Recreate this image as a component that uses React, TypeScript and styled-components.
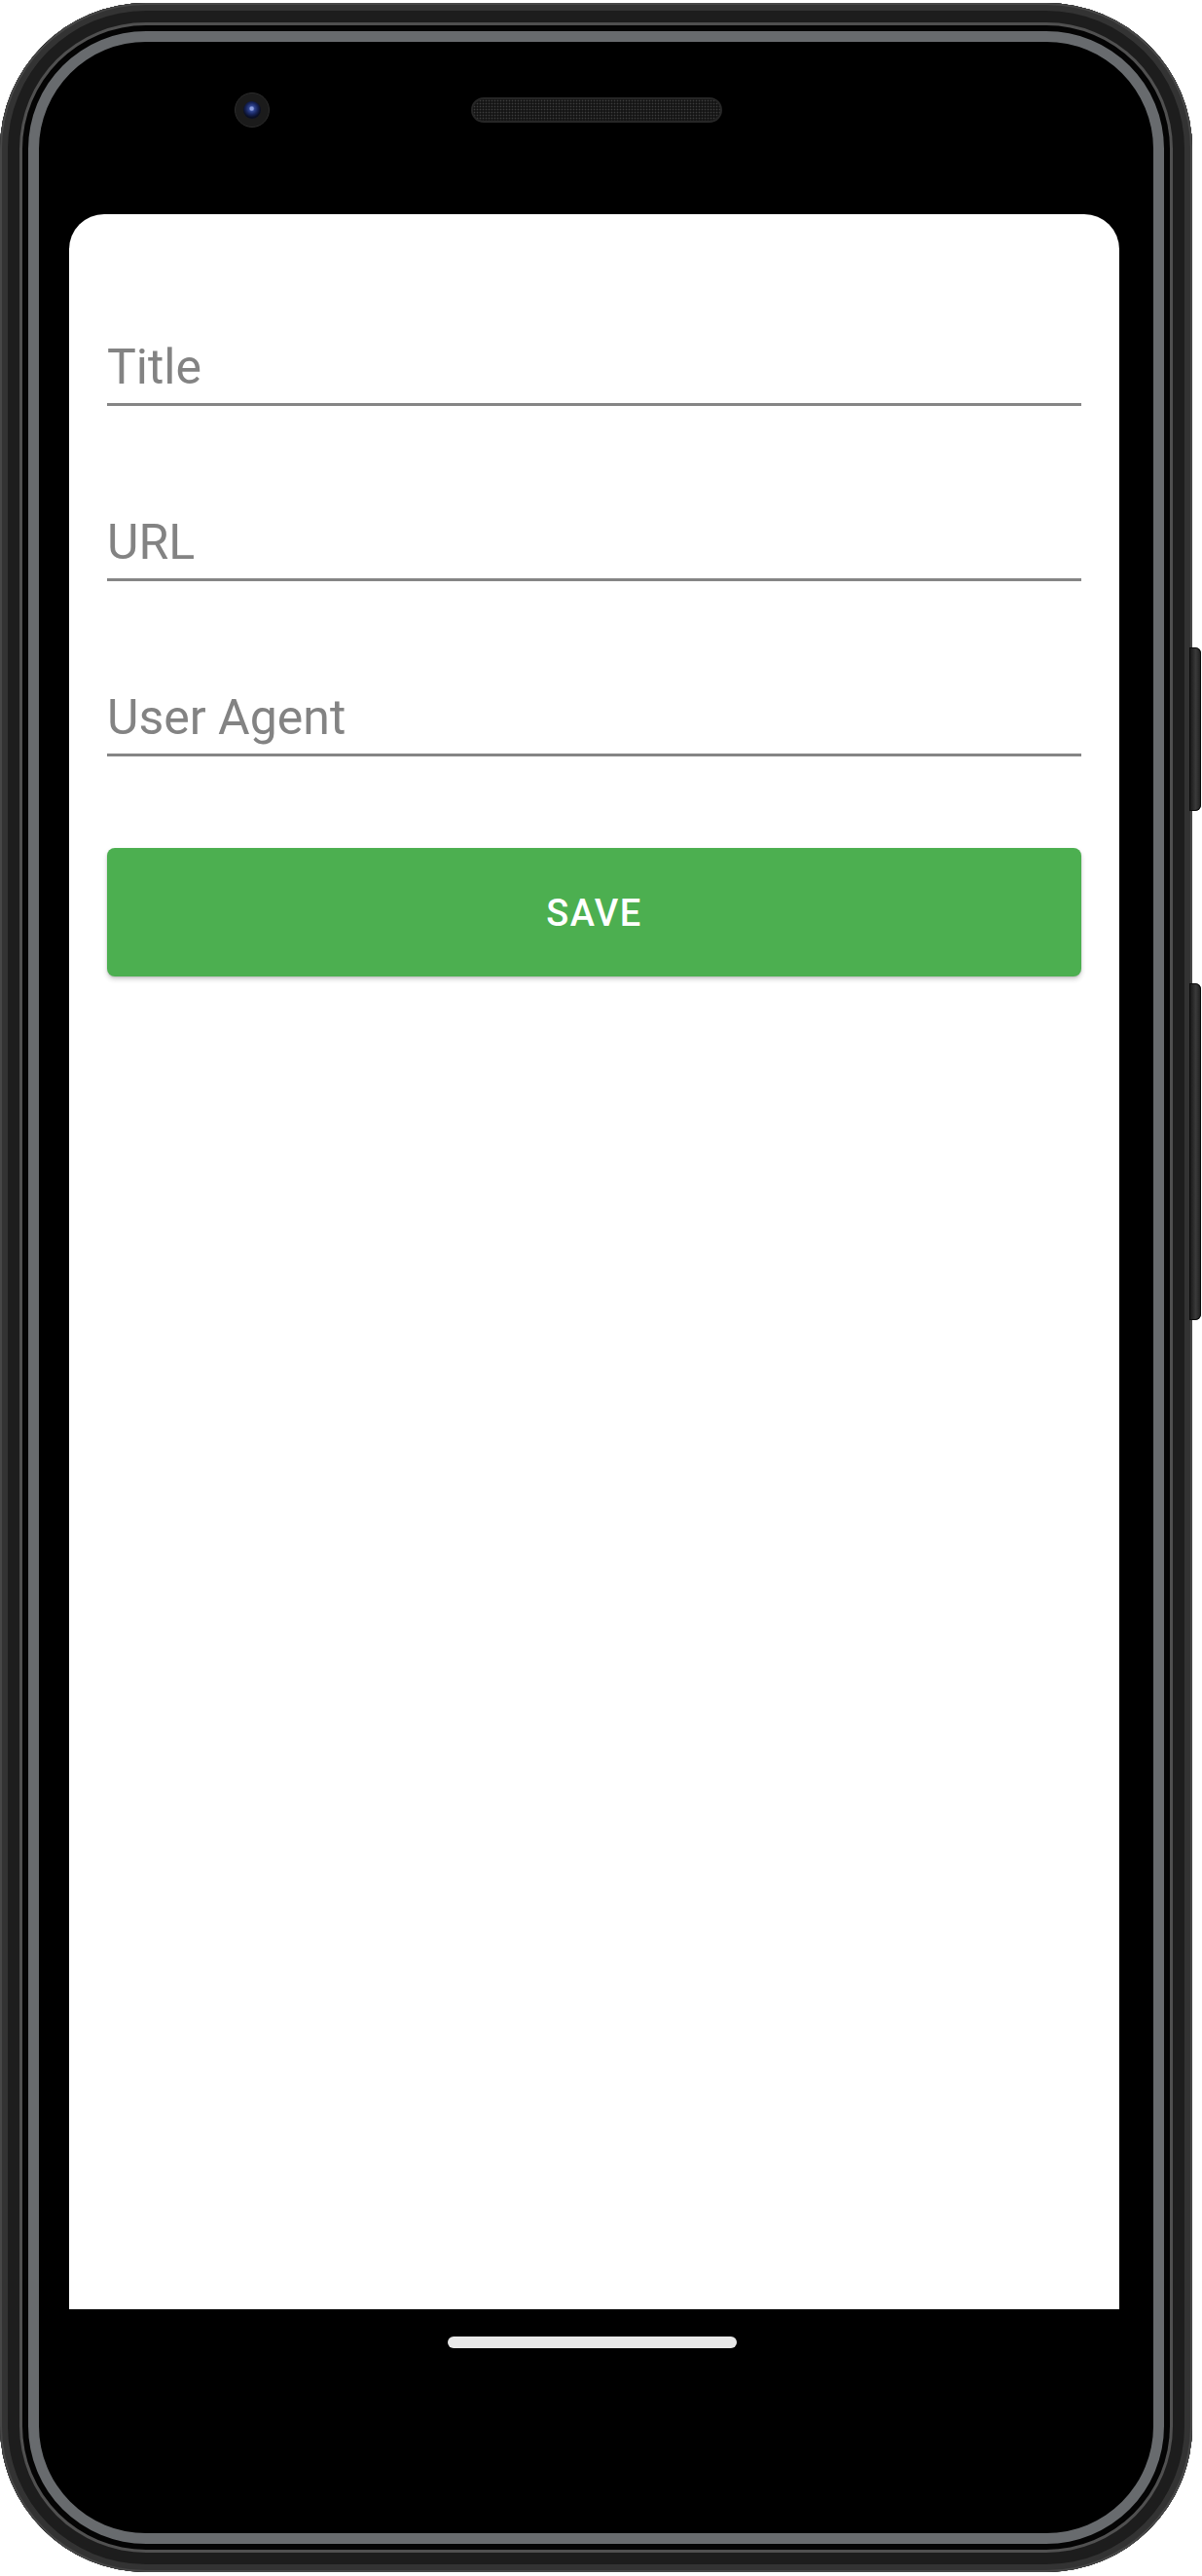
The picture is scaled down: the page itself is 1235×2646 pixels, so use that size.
import React from "react";
import styled, { createGlobalStyle } from "styled-components";

const GlobalStyle = createGlobalStyle`
  html, body {
    margin: 0;
    padding: 0;
    background: #ffffff;
  }
  * {
    box-sizing: border-box;
  }
`;

const Page = styled.div`
  padding: 3px 0 0 0;
  width: 1235px;
`;

const Device = styled.div`
  position: relative;
  width: 1225px;
  height: 2639px;
  border-radius: 150px;
  background: #000;
  display: flex;
  flex-direction: column;
  box-shadow:
    inset 0 0 0 2px #474747,
    inset 0 0 0 8px #333333,
    inset 0 0 0 20px #1d1d1d,
    inset 0 0 0 23px #505050,
    inset 0 0 0 29px #040404,
    inset 0 0 0 40px #686b6e;
`;

const TopBezel = styled.div`
  height: 217px;
  display: flex;
  align-items: center;
  padding-left: 241px;
  padding-top: 2px;
`;

const Camera = styled.div`
  width: 36px;
  height: 36px;
  border-radius: 50%;
  background: #1b1b1b;
  border: 1px solid #2c2c2c;
  display: flex;
  align-items: center;
  justify-content: center;
`;

const Lens = styled.div`
  width: 18px;
  height: 18px;
  border-radius: 50%;
  background: radial-gradient(
    circle at 48% 42%,
    #8ea0e0 0 1.5px,
    #2f448f 3px,
    #17245a 6px,
    #0a0f24 9px
  );
`;

const Speaker = styled.div`
  margin-left: 207px;
  width: 258px;
  height: 26px;
  border-radius: 13px;
  border: 2px solid #262626;
  background-color: #151515;
  background-image: radial-gradient(#3c3c3c 0.7px, transparent 1.1px);
  background-size: 3px 3px;
`;

const Screen = styled.div`
  margin-left: 71px;
  width: 1079px;
  height: 2152px;
  background: #ffffff;
  border-radius: 36px 36px 0 0;
  overflow: hidden;
`;

const Form = styled.form`
  display: flex;
  flex-direction: column;
  padding: 126px 39px 0;
`;

const Field = styled.input<{ $first?: boolean }>`
  display: block;
  width: 100%;
  height: 71px;
  margin: ${(p) => (p.$first ? "0" : "109px")} 0 0;
  padding: 0 0 6px 0;
  border: none;
  border-bottom: 3px solid #858585;
  border-radius: 0;
  background: transparent;
  font-family: Roboto, "Noto Sans", sans-serif;
  font-size: 50px;
  line-height: 62px;
  color: #212121;
  outline: none;

  &::placeholder {
    color: #838383;
    opacity: 1;
  }
`;

const SaveButton = styled.button`
  margin-top: 94px;
  height: 132px;
  width: 100%;
  border: none;
  border-radius: 8px;
  background: #4caf50;
  color: #ffffff;
  font-family: Roboto, "Noto Sans", sans-serif;
  font-weight: 500;
  font-size: 38px;
  letter-spacing: 1.4px;
  text-transform: uppercase;
  padding-top: 2px;
  box-shadow: 0 3px 5px rgba(0, 0, 0, 0.18), 0 1px 2px rgba(0, 0, 0, 0.12);
  cursor: pointer;
`;

const BottomBezel = styled.div`
  margin-left: 71px;
  width: 1075px;
  display: flex;
  justify-content: center;
  padding-top: 28px;
`;

const HomeBar = styled.div`
  width: 297px;
  height: 12px;
  border-radius: 6px;
  background: #e8e8e8;
`;

const SideButton = styled.div<{ $top: number; $height: number }>`
  position: absolute;
  left: 1222px;
  top: ${(p) => p.$top}px;
  width: 12px;
  height: ${(p) => p.$height}px;
  border-radius: 0 6px 6px 0;
  background: linear-gradient(90deg, #141414, #3a3a3a 55%, #1c1c1c);
  box-shadow: inset 0 0 0 1px #0c0c0c;
`;

export default function App() {
  return (
    <Page>
      <GlobalStyle />
      <Device>
        <TopBezel>
          <Camera>
            <Lens />
          </Camera>
          <Speaker />
        </TopBezel>
        <Screen>
          <Form onSubmit={(e) => e.preventDefault()}>
            <Field $first placeholder="Title" />
            <Field placeholder="URL" />
            <Field placeholder="User Agent" />
            <SaveButton type="submit">Save</SaveButton>
          </Form>
        </Screen>
        <BottomBezel>
          <HomeBar />
        </BottomBezel>
        <SideButton $top={662} $height={168} />
        <SideButton $top={1007} $height={346} />
      </Device>
    </Page>
  );
}
